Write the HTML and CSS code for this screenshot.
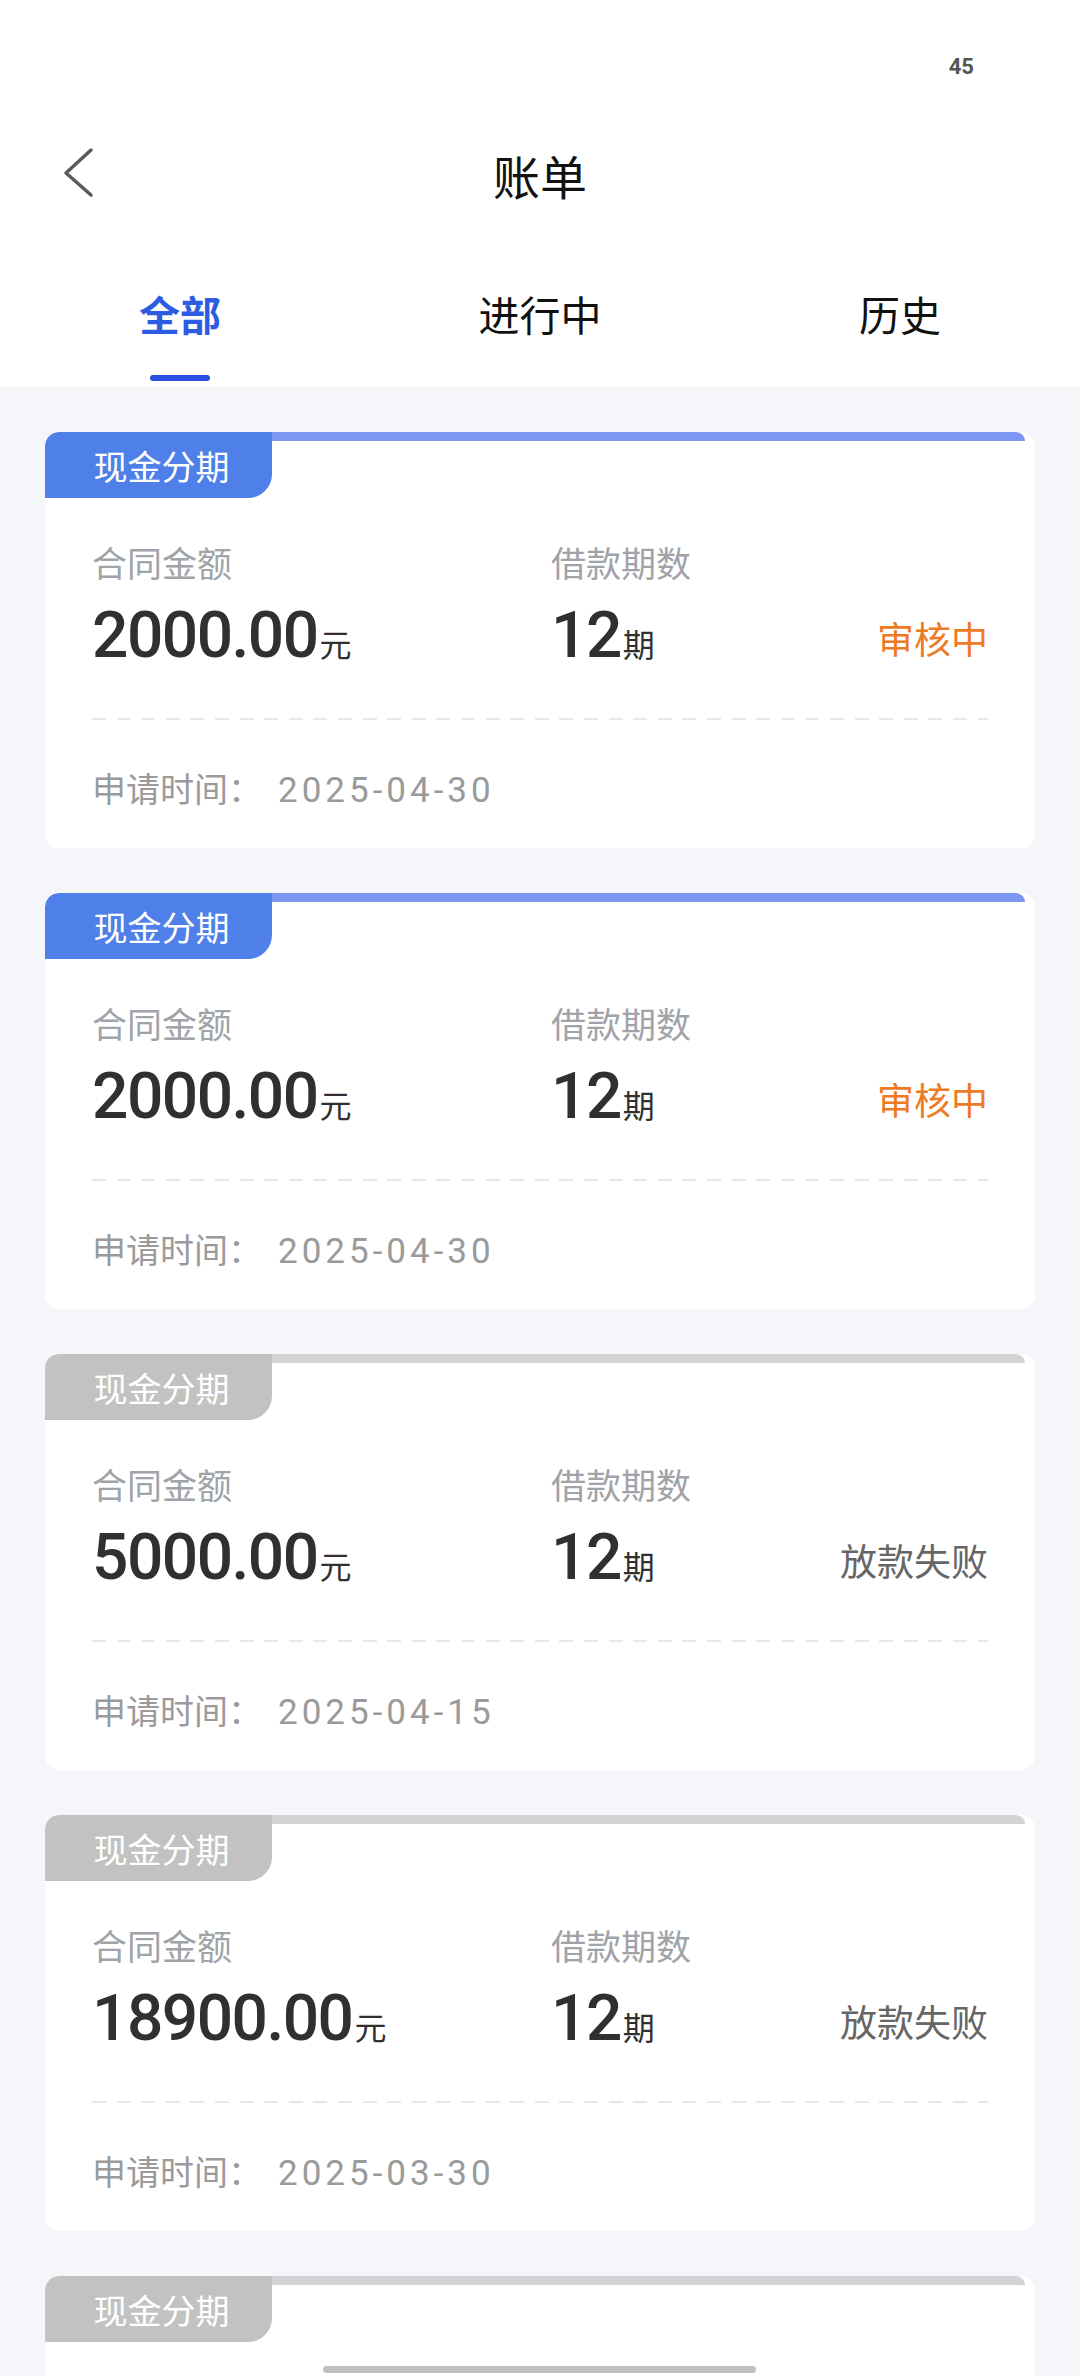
FILE: index.html
```html
<html>
<head>
  <meta charset="UTF-8">
  <title>账单</title>
  <link rel="stylesheet" href="styles.css">
</head>
<body>
<div class="page">

  <div class="status-bar"><span class="battery">45</span></div>

  <div class="nav">
    <div class="nav-back">
      <svg width="40" height="56" viewBox="0 0 40 56">
        <polyline points="35,3 10,26 35,48" fill="none" stroke="#5a5a5a" stroke-width="3.5" stroke-linecap="round" stroke-linejoin="round"/>
      </svg>
    </div>
    <div class="nav-title">账单</div>
    <div></div>
  </div>

  <div class="tabs">
    <div class="tab active"><span>全部</span><i class="tab-line"></i></div>
    <div class="tab"><span>进行中</span><i class="tab-line"></i></div>
    <div class="tab"><span>历史</span><i class="tab-line"></i></div>
  </div>

  <div class="list">

    <div class="card">
      <div class="card-head">
        <div class="tag">现金分期</div>
        <div class="strip"></div>
      </div>
      <div class="card-body">
        <div class="row labels">
          <div class="col-a">合同金额</div>
          <div class="col-b">借款期数</div>
        </div>
        <div class="row values">
          <div class="col-a"><span class="num">2000.00</span><span class="unit">元</span></div>
          <div class="col-b"><span class="num">12</span><span class="unit">期</span></div>
          <div class="state pending">审核中</div>
        </div>
        <div class="dash"></div>
        <div class="date">申请时间：<span class="date-val">2025-04-30</span></div>
      </div>
    </div>

    <div class="card">
      <div class="card-head">
        <div class="tag">现金分期</div>
        <div class="strip"></div>
      </div>
      <div class="card-body">
        <div class="row labels">
          <div class="col-a">合同金额</div>
          <div class="col-b">借款期数</div>
        </div>
        <div class="row values">
          <div class="col-a"><span class="num">2000.00</span><span class="unit">元</span></div>
          <div class="col-b"><span class="num">12</span><span class="unit">期</span></div>
          <div class="state pending">审核中</div>
        </div>
        <div class="dash"></div>
        <div class="date">申请时间：<span class="date-val">2025-04-30</span></div>
      </div>
    </div>

    <div class="card off">
      <div class="card-head">
        <div class="tag">现金分期</div>
        <div class="strip"></div>
      </div>
      <div class="card-body">
        <div class="row labels">
          <div class="col-a">合同金额</div>
          <div class="col-b">借款期数</div>
        </div>
        <div class="row values">
          <div class="col-a"><span class="num">5000.00</span><span class="unit">元</span></div>
          <div class="col-b"><span class="num">12</span><span class="unit">期</span></div>
          <div class="state failed">放款失败</div>
        </div>
        <div class="dash"></div>
        <div class="date">申请时间：<span class="date-val">2025-04-15</span></div>
      </div>
    </div>

    <div class="card off">
      <div class="card-head">
        <div class="tag">现金分期</div>
        <div class="strip"></div>
      </div>
      <div class="card-body">
        <div class="row labels">
          <div class="col-a">合同金额</div>
          <div class="col-b">借款期数</div>
        </div>
        <div class="row values">
          <div class="col-a"><span class="num">18900.00</span><span class="unit">元</span></div>
          <div class="col-b"><span class="num">12</span><span class="unit">期</span></div>
          <div class="state failed">放款失败</div>
        </div>
        <div class="dash"></div>
        <div class="date">申请时间：<span class="date-val">2025-03-30</span></div>
      </div>
    </div>

    <!-- la última tarjeta queda cortada por el borde de la pantalla -->
    <div class="card off">
      <div class="card-head">
        <div class="tag">现金分期</div>
        <div class="strip"></div>
      </div>
    </div>

  </div>

  <div class="home-bar"></div>
</div>
</body>
</html>
```

FILE: styles.css
```css
body {
  margin: 0;
  background-color: #f5f6fa;
  font-family: "Noto Sans CJK SC", "Noto Sans", sans-serif;
  color: #111;
}

.page {
  position: relative;
  width: 1080px;
  height: 2376px;
  overflow: hidden;
  background-color: #f5f6fa;
}

/* barra de estado */
.status-bar {
  height: 120px;
  box-sizing: border-box;
  padding: 56px 106px 0 0;
  display: flex;
  justify-content: flex-end;
  align-items: flex-start;
  background-color: white;
}

.battery {
  font-family: Roboto, "Liberation Sans", sans-serif;
  font-weight: bold;
  font-size: 22px;
  line-height: 22px;
  color: #555;
}

/* cabecera */
.nav {
  height: 110px;
  display: grid;
  grid-template-columns: 1fr auto 1fr;
  align-items: center;
  background-color: white;
}

.nav-back {
  padding-left: 56px;
  display: flex;
  align-items: center;
}

.nav-title {
  font-size: 47px;
  line-height: 60px;
  color: #111;
}

/* pestañas */
.tabs {
  display: grid;
  grid-template-columns: 1fr 1fr 1fr;
  padding: 53px 0 6px;
  background-color: white;
}

.tab {
  display: flex;
  flex-direction: column;
  align-items: center;
  font-size: 41px;
  line-height: 60px;
  color: #111;
}

.tab-line {
  display: block;
  width: 60px;
  height: 6px;
  margin-top: 32px;
  border-radius: 3px;
  background-color: transparent;
}

.tab.active {
  color: #2c5be4;
  font-weight: bold;
}

.tab.active .tab-line {
  background-color: #2b50e0;
}

/* listado */
.list {
  padding: 45px 45px 0;
}

.card {
  height: 416px;
  margin-bottom: 45px;
  background-color: white;
  border-radius: 14px;
  overflow: hidden;
}

.card-head {
  display: flex;
  height: 66px;
}

.tag {
  width: 227px;
  height: 66px;
  display: flex;
  align-items: center;
  justify-content: center;
  box-sizing: border-box;
  padding-left: 6px;
  background-color: #4f7fe8;
  color: white;
  font-size: 34px;
  border-radius: 14px 0 24px 0;
}

.strip {
  flex: 1;
  height: 9px;
  margin-right: 10px;
  background-color: #7b97f2;
  border-radius: 0 10px 0 0;
}

.card.off .tag {
  background-color: #c2c2c2;
}

.card.off .strip {
  background-color: #d2d3d5;
}

.card-body {
  padding: 40px 47px 0;
}

.row {
  display: flex;
}

.col-a {
  width: 459px;
}

.col-b {
  flex: 1;
}

.labels {
  font-size: 35px;
  line-height: 48px;
  color: #a0a3a8;
}

.values {
  margin-top: 12px;
  height: 76px;
  align-items: baseline;
  color: #303030;
}

.num {
  font-family: Roboto, "Liberation Sans", sans-serif;
  font-weight: 500;
  font-size: 64px;
  line-height: 76px;
  letter-spacing: -1.5px;
}

.unit {
  font-size: 32px;
  margin-left: 2px;
}

.state {
  font-size: 37px;
  position: relative;
  top: -3px;
}

.state.pending {
  color: #ee7a24;
}

.state.failed {
  color: #666;
}

.dash {
  height: 2px;
  margin-top: 44px;
  background: repeating-linear-gradient(to right, #e8e8e8 0 14px, transparent 14px 24.6px);
}

.date {
  margin-top: 44px;
  font-size: 34px;
  line-height: 48px;
  color: #9a9a9a;
}

.date-val {
  font-family: Roboto, "Liberation Sans", sans-serif;
  font-size: 35px;
  letter-spacing: 4px;
  margin-left: 16px;
}

.home-bar {
  position: absolute;
  left: 323px;
  top: 2366px;
  width: 433px;
  height: 7px;
  border-radius: 4px;
  background-color: #c0c0c0;
}
```
